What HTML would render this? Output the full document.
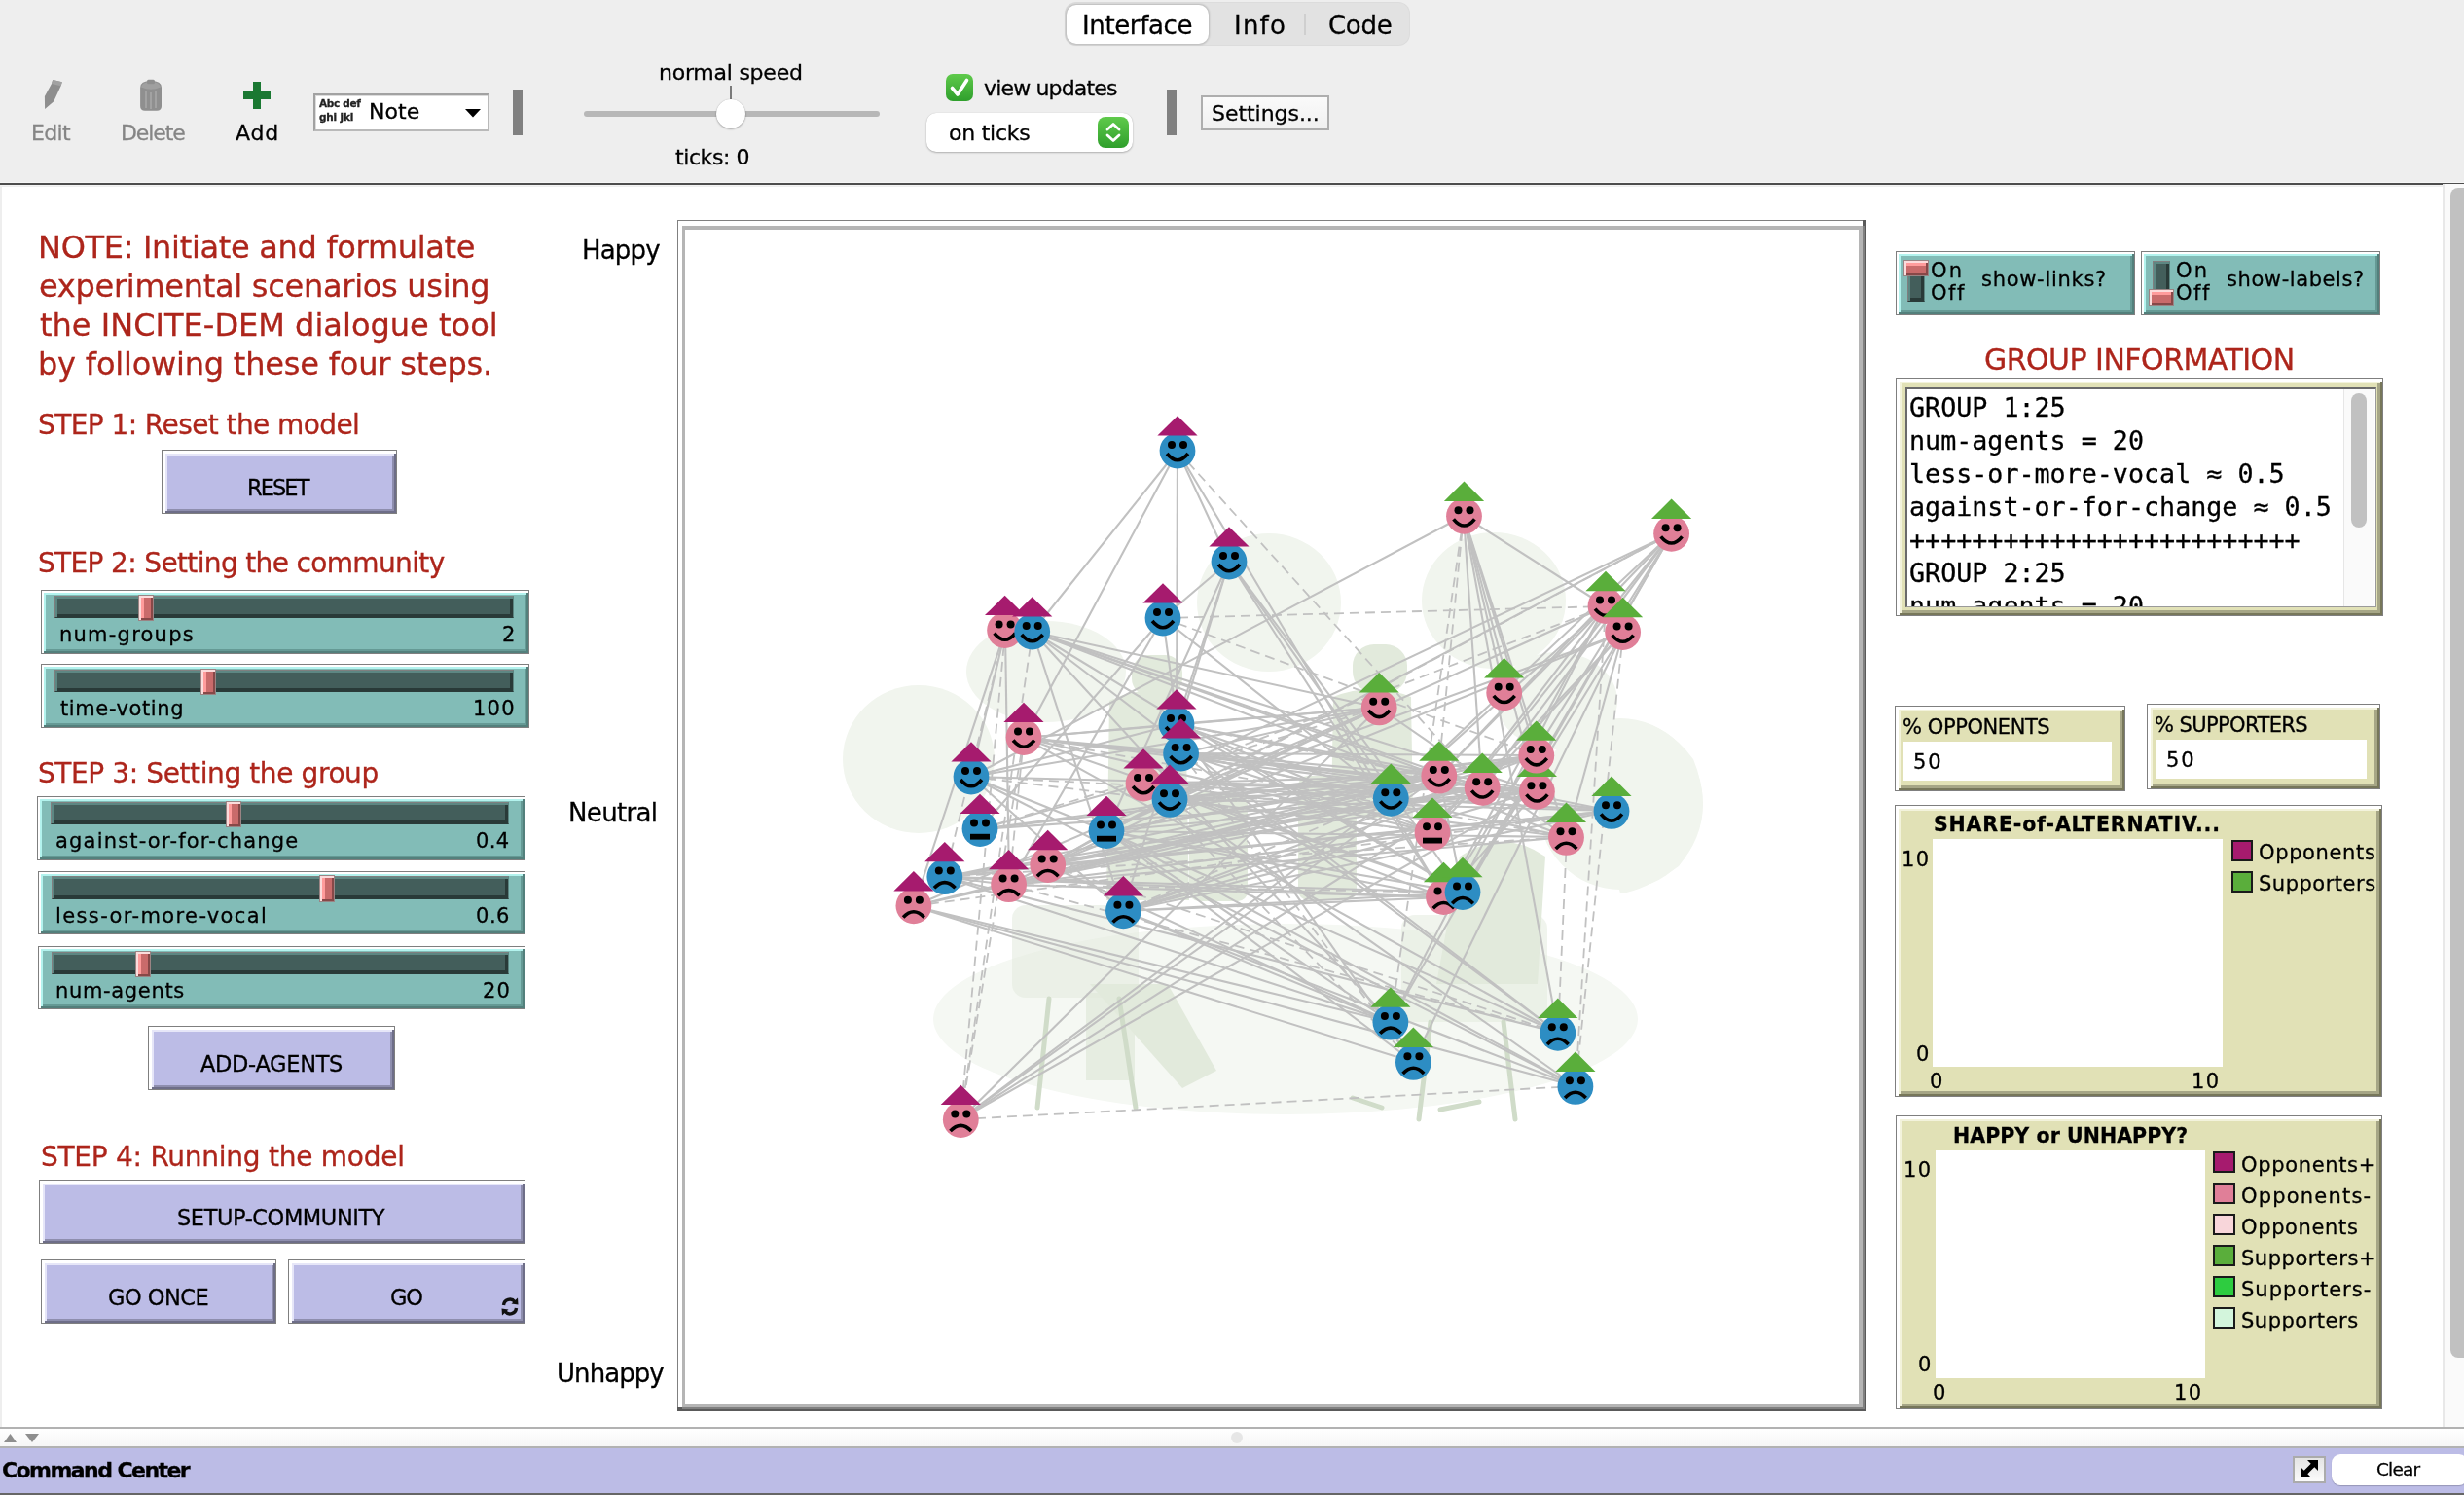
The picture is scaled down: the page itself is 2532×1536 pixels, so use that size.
<!DOCTYPE html>
<html lang="en"><head><meta charset="utf-8"><title>NetLogo - INCITE-DEM dialogue tool</title>
<style>
html,body{margin:0;padding:0;}
body{width:2532px;height:1536px;overflow:hidden;background:#fff;position:relative;font-family:"DejaVu Sans","Liberation Sans",sans-serif;}
.t{position:absolute;white-space:pre;-webkit-text-stroke:0.3px currentColor;will-change:transform;}
div{box-sizing:border-box;}
.bev{border:1px solid #7f7f7f;}
.sl{background:#82bcb7;box-shadow:inset 2px 2px 0 #fff,inset -2px -2px 0 #53807c,inset 4px 4px 0 #b3f3ee,inset -4px -4px 0 #659a95;}
.bt{background:#bcbce6;box-shadow:inset 3px 3px 0 #fff,inset -2px -2px 0 #6e6e88,inset 5px 5px 0 #e6e6f8,inset -4px -4px 0 #8e8eae;}
.mo{background:#e1e1b6;box-shadow:inset 3px 3px 0 #fff,inset -2px -2px 0 #77775a,inset 5px 5px 0 #f3f3dc,inset -5px -5px 0 #a6a686;}
.ch{background:#435e5b;border:1px solid #7f7f7f;border-right-color:#5b8581;border-bottom-color:#2a3b39;box-shadow:inset 2px 2px 0 #5d8783,inset -3px -3px 0 #293a38;}
.hd{background:#c96b6b;border:1px solid #9a8484;box-shadow:inset 2px 2px 0 #fbdcdc,inset -2px -2px 0 #874848,inset 5px 0 0 #ff9c9c;}
</style></head>
<body>
<div class="" style="position:absolute;left:0px;top:0px;width:2532px;height:192px;background:#eeeeee;"></div>
<div class="" style="position:absolute;left:0px;top:187px;width:2532px;height:1px;background:#f6f6f6;"></div>
<div class="" style="position:absolute;left:0px;top:188px;width:2532px;height:2px;background:#4d4d4d;"></div>
<div class="" style="position:absolute;left:0px;top:190px;width:2532px;height:1px;background:#f4f4f4;"></div>
<div class="" style="position:absolute;left:1095px;top:3px;width:353px;height:43px;background:#e2e2e2;border-radius:11px;box-shadow:0 0 0 1px #dcdcdc;"></div>
<div class="" style="position:absolute;left:1096px;top:5px;width:146px;height:40px;background:#fff;border-radius:10px;box-shadow:0 0 2px 1px rgba(0,0,0,.18);"></div>
<div class="" style="position:absolute;left:1340px;top:14px;width:2px;height:22px;background:#cfcfcf;"></div>
<div class="t" style="left:1111.5px;top:12.6px;font-size:26px;line-height:26px;letter-spacing:-0.37px;color:#000;font-weight:400;font-family:"DejaVu Sans","Liberation Sans",sans-serif;">Interface</div>
<div class="t" style="left:1267.5px;top:12.6px;font-size:26px;line-height:26px;letter-spacing:1.21px;color:#000;font-weight:400;font-family:"DejaVu Sans","Liberation Sans",sans-serif;">Info</div>
<div class="t" style="left:1365.0px;top:12.6px;font-size:26px;line-height:26px;letter-spacing:-0.28px;color:#000;font-weight:400;font-family:"DejaVu Sans","Liberation Sans",sans-serif;">Code</div>
<div class="t" style="left:31.5px;top:125.6px;font-size:22px;line-height:22px;letter-spacing:-0.65px;color:#858585;font-weight:400;font-family:"DejaVu Sans","Liberation Sans",sans-serif;">Edit</div>
<div class="t" style="left:123.6px;top:125.6px;font-size:22px;line-height:22px;letter-spacing:-1.10px;color:#858585;font-weight:400;font-family:"DejaVu Sans","Liberation Sans",sans-serif;">Delete</div>
<div class="t" style="left:242.1px;top:125.6px;font-size:22px;line-height:22px;letter-spacing:0.76px;color:#000;font-weight:400;font-family:"DejaVu Sans","Liberation Sans",sans-serif;">Add</div>
<svg style="position:absolute;left:40px;top:78px" width="30" height="38" viewBox="0 0 30 38"><path d="M14.2 4 L23.8 6.3 L22.6 10.3 L15.2 26.2 L6.1 34 L5.9 21 L13 8Z" fill="#8e8e8e"/><path d="M14.2 4 L23.8 6.3 L22.6 10.3 L13 8Z" fill="#a2a2a2"/></svg>
<svg style="position:absolute;left:140px;top:78px" width="30" height="40" viewBox="0 0 30 40"><path d="M4.1 12 Q4.1 5 15 5 Q26 5 26 12 L26 31 Q26 35.8 21 35.8 L9 35.8 Q4.1 35.8 4.1 31Z" fill="#8f8f8f"/><path d="M5 11.5 Q15 16 25 11.5 Q24 6 15 6 Q6 6 5 11.5Z" fill="#a0a0a0"/><rect x="11" y="3.8" width="8" height="4.5" rx="1.5" fill="#8f8f8f"/><path d="M10 16v17M15 17v17M20 16v17" stroke="#a2a2a2" stroke-width="2"/></svg>
<div class="" style="position:absolute;left:250px;top:94px;width:28px;height:8px;background:#1a7832;"></div>
<div class="" style="position:absolute;left:260px;top:84px;width:8px;height:28px;background:#1a7832;"></div>
<div class="" style="position:absolute;left:322px;top:96px;width:181px;height:39px;background:#fff;border:2px solid #a2a2a2;border-right-color:#b9b9b9;border-bottom-color:#b9b9b9;box-shadow:inset 1px 1px 0 #dcdcdc;"></div>
<div class="t" style="left:327.9px;top:101.4px;font-size:10.5px;line-height:10.5px;letter-spacing:-0.30px;color:#222;font-weight:700;font-family:"DejaVu Sans","Liberation Sans",sans-serif;-webkit-text-stroke:0;">Abc def</div>
<div class="t" style="left:327.6px;top:115.4px;font-size:10.5px;line-height:10.5px;letter-spacing:-0.19px;color:#222;font-weight:700;font-family:"DejaVu Sans","Liberation Sans",sans-serif;-webkit-text-stroke:0;">ghi jkl</div>
<div class="t" style="left:378.6px;top:104.0px;font-size:22px;line-height:22px;letter-spacing:0.05px;color:#000;font-weight:400;font-family:"DejaVu Sans","Liberation Sans",sans-serif;">Note</div>
<svg style="position:absolute;left:478px;top:112px" width="16" height="9"><path d="M0 0H16L8 8.5Z" fill="#000"/></svg>
<div class="" style="position:absolute;left:527px;top:92px;width:10px;height:47px;background:#808080;"></div>
<div class="t" style="left:677.0px;top:64.2px;font-size:22px;line-height:22px;letter-spacing:-0.24px;color:#000;font-weight:400;font-family:"DejaVu Sans","Liberation Sans",sans-serif;">normal speed</div>
<div class="" style="position:absolute;left:749.5px;top:88px;width:2.0px;height:14px;background:#7a7a7a;"></div>
<div class="" style="position:absolute;left:600px;top:114px;width:304px;height:6px;background:#b7b7b7;border-radius:3px;"></div>
<div class="" style="position:absolute;left:736px;top:102px;width:30px;height:30px;background:#fff;border-radius:15px;box-shadow:0 1px 2px rgba(0,0,0,.28),0 0 1px rgba(0,0,0,.25);"></div>
<div class="t" style="left:694.2px;top:150.6px;font-size:22px;line-height:22px;letter-spacing:-0.42px;color:#000;font-weight:400;font-family:"DejaVu Sans","Liberation Sans",sans-serif;">ticks: 0</div>
<div class="" style="position:absolute;left:972px;top:76px;width:28px;height:28px;background:linear-gradient(#5fca4b,#2f9f2c);border-radius:7px;"></div>
<svg style="position:absolute;left:972px;top:76px" width="28" height="28"><path d="M6.5 14.5 L12 21 L21.5 6.5" fill="none" stroke="#fff" stroke-width="3.6" stroke-linecap="round" stroke-linejoin="round"/></svg>
<div class="t" style="left:1011.3px;top:80.2px;font-size:22px;line-height:22px;letter-spacing:-0.84px;color:#000;font-weight:400;font-family:"DejaVu Sans","Liberation Sans",sans-serif;">view updates</div>
<div class="" style="position:absolute;left:952px;top:116px;width:212px;height:40px;background:#fff;border-radius:10px;box-shadow:0 1px 2px rgba(0,0,0,.25),0 0 1px rgba(0,0,0,.2);"></div>
<div class="t" style="left:975.4px;top:125.6px;font-size:22px;line-height:22px;letter-spacing:-0.24px;color:#000;font-weight:400;font-family:"DejaVu Sans","Liberation Sans",sans-serif;">on ticks</div>
<div class="" style="position:absolute;left:1128px;top:120px;width:32px;height:32px;background:linear-gradient(#5fca4b,#2f9f2c);border-radius:8px;"></div>
<svg style="position:absolute;left:1128px;top:120px" width="32" height="32"><path d="M10 13 L16 7.5 L22 13 M10 19 L16 24.5 L22 19" fill="none" stroke="#fff" stroke-width="2.8" stroke-linecap="round" stroke-linejoin="round"/></svg>
<div class="" style="position:absolute;left:1199px;top:92px;width:10px;height:47px;background:#808080;"></div>
<div class="" style="position:absolute;left:1234px;top:98px;width:132px;height:36px;background:linear-gradient(#fafafa,#f0f0f0);border:2px solid #aeaeae;"></div>
<div class="t" style="left:1244.6px;top:106.2px;font-size:22px;line-height:22px;letter-spacing:-0.04px;color:#000;font-weight:400;font-family:"DejaVu Sans","Liberation Sans",sans-serif;">Settings...</div>
<div class="" style="position:absolute;left:0px;top:192px;width:2px;height:1274px;background:#eeeeee;"></div>
<div class="t" style="left:38.8px;top:238.1px;font-size:32px;line-height:32px;letter-spacing:-0.31px;color:#ad251b;font-weight:400;font-family:"DejaVu Sans","Liberation Sans",sans-serif;">NOTE: Initiate and formulate</div>
<div class="t" style="left:40.0px;top:278.0px;font-size:32px;line-height:32px;letter-spacing:-0.28px;color:#ad251b;font-weight:400;font-family:"DejaVu Sans","Liberation Sans",sans-serif;">experimental scenarios using</div>
<div class="t" style="left:41.0px;top:317.9px;font-size:32px;line-height:32px;letter-spacing:0.02px;color:#ad251b;font-weight:400;font-family:"DejaVu Sans","Liberation Sans",sans-serif;">the INCITE-DEM dialogue tool</div>
<div class="t" style="left:38.9px;top:357.5px;font-size:32px;line-height:32px;letter-spacing:-0.20px;color:#ad251b;font-weight:400;font-family:"DejaVu Sans","Liberation Sans",sans-serif;">by following these four steps.</div>
<div class="t" style="left:39.1px;top:422.6px;font-size:28px;line-height:28px;letter-spacing:-0.58px;color:#ad251b;font-weight:400;font-family:"DejaVu Sans","Liberation Sans",sans-serif;">STEP 1: Reset the model</div>
<div class="bev bt" style="position:absolute;left:166px;top:462px;width:242px;height:66px;"></div>
<div class="t" style="left:253.7px;top:489.8px;font-size:22.5px;line-height:22.5px;letter-spacing:-1.92px;color:#000;font-weight:400;font-family:"DejaVu Sans","Liberation Sans",sans-serif;">RESET</div>
<div class="t" style="left:39.1px;top:565.1px;font-size:28px;line-height:28px;letter-spacing:-0.65px;color:#ad251b;font-weight:400;font-family:"DejaVu Sans","Liberation Sans",sans-serif;">STEP 2: Setting the community</div>
<div class="bev sl" style="position:absolute;left:42px;top:606px;width:502px;height:66px;"></div>
<div class="ch" style="position:absolute;left:56px;top:611.7px;width:471.70000000000005px;height:23.799999999999955px;"></div>
<div class="hd" style="position:absolute;left:142px;top:610.5px;width:16px;height:27.5px;"></div>
<div class="t" style="left:60.8px;top:642.2px;font-size:21px;line-height:21px;letter-spacing:1.23px;color:#000;font-weight:400;font-family:"DejaVu Sans","Liberation Sans",sans-serif;">num-groups</div>
<div class="t" style="left:515.5px;top:642.2px;font-size:21px;line-height:21px;letter-spacing:0.00px;color:#000;font-weight:400;font-family:"DejaVu Sans","Liberation Sans",sans-serif;">2</div>
<div class="bev sl" style="position:absolute;left:42px;top:682px;width:502px;height:65.5px;"></div>
<div class="ch" style="position:absolute;left:56px;top:687.7px;width:471.70000000000005px;height:23.799999999999955px;"></div>
<div class="hd" style="position:absolute;left:206px;top:686.5px;width:16px;height:27.5px;"></div>
<div class="t" style="left:62.2px;top:718.2px;font-size:21px;line-height:21px;letter-spacing:0.61px;color:#000;font-weight:400;font-family:"DejaVu Sans","Liberation Sans",sans-serif;">time-voting</div>
<div class="t" style="left:485.6px;top:718.2px;font-size:21px;line-height:21px;letter-spacing:1.23px;color:#000;font-weight:400;font-family:"DejaVu Sans","Liberation Sans",sans-serif;">100</div>
<div class="t" style="left:39.1px;top:780.7px;font-size:28px;line-height:28px;letter-spacing:-0.40px;color:#ad251b;font-weight:400;font-family:"DejaVu Sans","Liberation Sans",sans-serif;">STEP 3: Setting the group</div>
<div class="bev sl" style="position:absolute;left:38px;top:818px;width:501.5px;height:65.5px;"></div>
<div class="ch" style="position:absolute;left:52px;top:823.7px;width:471.20000000000005px;height:23.799999999999955px;"></div>
<div class="hd" style="position:absolute;left:232px;top:822.5px;width:16px;height:27.5px;"></div>
<div class="t" style="left:57.4px;top:854.2px;font-size:21px;line-height:21px;letter-spacing:1.19px;color:#000;font-weight:400;font-family:"DejaVu Sans","Liberation Sans",sans-serif;">against-or-for-change</div>
<div class="t" style="left:489.1px;top:854.2px;font-size:21px;line-height:21px;letter-spacing:0.41px;color:#000;font-weight:400;font-family:"DejaVu Sans","Liberation Sans",sans-serif;">0.4</div>
<div class="bev sl" style="position:absolute;left:38.5px;top:894.5px;width:501.0px;height:65.0px;"></div>
<div class="ch" style="position:absolute;left:52.5px;top:900.2px;width:470.70000000000005px;height:23.799999999999955px;"></div>
<div class="hd" style="position:absolute;left:328px;top:899.0px;width:16px;height:27.5px;"></div>
<div class="t" style="left:57.3px;top:930.7px;font-size:21px;line-height:21px;letter-spacing:1.39px;color:#000;font-weight:400;font-family:"DejaVu Sans","Liberation Sans",sans-serif;">less-or-more-vocal</div>
<div class="t" style="left:489.1px;top:930.7px;font-size:21px;line-height:21px;letter-spacing:0.52px;color:#000;font-weight:400;font-family:"DejaVu Sans","Liberation Sans",sans-serif;">0.6</div>
<div class="bev sl" style="position:absolute;left:38.5px;top:972px;width:501.0px;height:65px;"></div>
<div class="ch" style="position:absolute;left:52.5px;top:977.7px;width:470.70000000000005px;height:23.799999999999955px;"></div>
<div class="hd" style="position:absolute;left:138.5px;top:976.5px;width:16.0px;height:27.5px;"></div>
<div class="t" style="left:57.3px;top:1008.2px;font-size:21px;line-height:21px;letter-spacing:0.67px;color:#000;font-weight:400;font-family:"DejaVu Sans","Liberation Sans",sans-serif;">num-agents</div>
<div class="t" style="left:495.8px;top:1008.2px;font-size:21px;line-height:21px;letter-spacing:1.16px;color:#000;font-weight:400;font-family:"DejaVu Sans","Liberation Sans",sans-serif;">20</div>
<div class="bev bt" style="position:absolute;left:152px;top:1054px;width:254px;height:65.5px;"></div>
<div class="t" style="left:206.4px;top:1081.8px;font-size:22.5px;line-height:22.5px;letter-spacing:-0.31px;color:#000;font-weight:400;font-family:"DejaVu Sans","Liberation Sans",sans-serif;">ADD-AGENTS</div>
<div class="t" style="left:42.2px;top:1174.6px;font-size:28px;line-height:28px;letter-spacing:-0.26px;color:#ad251b;font-weight:400;font-family:"DejaVu Sans","Liberation Sans",sans-serif;">STEP 4: Running the model</div>
<div class="bev bt" style="position:absolute;left:40px;top:1212px;width:500px;height:65.5px;"></div>
<div class="t" style="left:182.4px;top:1239.8px;font-size:22.5px;line-height:22.5px;letter-spacing:-0.43px;color:#000;font-weight:400;font-family:"DejaVu Sans","Liberation Sans",sans-serif;">SETUP-COMMUNITY</div>
<div class="bev bt" style="position:absolute;left:42px;top:1294px;width:242px;height:65.5px;"></div>
<div class="t" style="left:111.2px;top:1321.8px;font-size:22.5px;line-height:22.5px;letter-spacing:-0.50px;color:#000;font-weight:400;font-family:"DejaVu Sans","Liberation Sans",sans-serif;">GO ONCE</div>
<div class="bev bt" style="position:absolute;left:296px;top:1294px;width:244px;height:65.5px;"></div>
<div class="t" style="left:401.0px;top:1321.8px;font-size:22.5px;line-height:22.5px;letter-spacing:-1.24px;color:#000;font-weight:400;font-family:"DejaVu Sans","Liberation Sans",sans-serif;">GO</div>
<svg style="position:absolute;left:514px;top:1332px" width="20" height="21" viewBox="0 0 20 21"><path d="M3.5 9 A6.5 6.5 0 0 1 15 5.5" fill="none" stroke="#111" stroke-width="3.4"/><path d="M11.5 7.5 L18.5 8.5 L18 1.5Z" fill="#111"/><path d="M16.5 12 A6.5 6.5 0 0 1 5 15.5" fill="none" stroke="#111" stroke-width="3.4"/><path d="M8.5 13.5 L1.5 12.5 L2 19.5Z" fill="#111"/></svg>
<div class="t" style="left:597.6px;top:244.0px;font-size:26px;line-height:26px;letter-spacing:-0.81px;color:#000;font-weight:400;font-family:"DejaVu Sans","Liberation Sans",sans-serif;">Happy</div>
<div class="t" style="left:583.5px;top:822.1px;font-size:26px;line-height:26px;letter-spacing:-0.65px;color:#000;font-weight:400;font-family:"DejaVu Sans","Liberation Sans",sans-serif;">Neutral</div>
<div class="t" style="left:571.6px;top:1397.9px;font-size:26px;line-height:26px;letter-spacing:-0.93px;color:#000;font-weight:400;font-family:"DejaVu Sans","Liberation Sans",sans-serif;">Unhappy</div>
<div class="" style="position:absolute;left:696px;top:226px;width:1222px;height:1224px;background:#fff;border-top:1px solid #808080;border-left:1px solid #808080;"></div>
<div class="" style="position:absolute;left:701px;top:232px;width:1217px;height:1218px;background:#b5b5b5;"></div>
<div class="" style="position:absolute;left:701px;top:1446px;width:1217px;height:4px;background:#5a5a5a;"></div>
<div class="" style="position:absolute;left:1914px;top:232px;width:4px;height:1218px;background:#5a5a5a;"></div>
<div class="" style="position:absolute;left:701px;top:1446px;width:1215px;height:2px;background:#808080;"></div>
<div class="" style="position:absolute;left:1914px;top:232px;width:2px;height:1216px;background:#808080;"></div>
<div class="" style="position:absolute;left:696px;top:1446px;width:5px;height:4px;background:#5a5a5a;"></div>
<div class="" style="position:absolute;left:1914px;top:226px;width:4px;height:6px;background:#5a5a5a;"></div>
<div class="" style="position:absolute;left:704px;top:236px;width:1206px;height:1206px;background:#fff;"></div>
<svg style="position:absolute;left:0;top:0" width="2532" height="1536" viewBox="0 0 2532 1536">
<g fill="#f1f5ee"><ellipse cx="944" cy="780" rx="78" ry="76"/><ellipse cx="1075" cy="690" rx="82" ry="52"/><ellipse cx="1304" cy="619" rx="74" ry="71"/><ellipse cx="1535" cy="617" rx="74" ry="70"/><ellipse cx="1600" cy="720" rx="62" ry="50"/><path d="M1634 745Q1700 725 1740 780Q1765 840 1725 890Q1690 915 1665 918L1650 860Z"/><ellipse cx="1665" cy="826" rx="85" ry="88"/></g>
<ellipse cx="1321" cy="1047" rx="362" ry="98" fill="#f5f8f3"/>
<g fill="#e2eadc"><rect x="1163" y="673" width="52" height="42" rx="18"/><path d="M1140 720Q1178 700 1218 720L1222 925L1137 925Z"/><rect x="1222" y="814" width="60" height="112" rx="10"/><rect x="1334" y="797" width="60" height="128" rx="10"/><rect x="1390" y="662" width="56" height="50" rx="22"/><path d="M1370 716Q1410 700 1450 716L1452 840L1368 840Z"/><path d="M1500 880Q1545 850 1588 880L1580 1011L1476 1011Z"/><path d="M1120 1011L1200 1011L1250 1100L1215 1118Z"/><rect x="1116" y="1020" width="50" height="90" opacity=".8"/><rect x="1040" y="930" width="130" height="95" rx="14" opacity=".55"/><rect x="1440" y="940" width="150" height="110" rx="14" opacity=".5"/></g>
<g stroke="#d0dcc9" stroke-width="5" fill="none" stroke-linecap="round"><path d="M1078 1026L1066 1138M1150 1026L1167 1138M1470 1050L1458 1150M1545 1050L1557 1150M1390 1128L1420 1138M1520 1132L1480 1140"/></g>
<g stroke="#c1c1c1" stroke-width="2.1" fill="none">
<line x1="1210" y1="463" x2="1263" y2="577"/>
<line x1="1210" y1="463" x2="1061" y2="649"/>
<line x1="1210" y1="463" x2="1052" y2="758"/>
<line x1="1210" y1="463" x2="1209" y2="744"/>
<line x1="1210" y1="463" x2="1523" y2="809" stroke-dasharray="10 6" stroke-width="1.8"/>
<line x1="1210" y1="463" x2="1484" y2="922"/>
<line x1="1263" y1="577" x2="1195" y2="635"/>
<line x1="1263" y1="577" x2="1209" y2="744"/>
<line x1="1263" y1="577" x2="1137" y2="854"/>
<line x1="1263" y1="577" x2="1154" y2="936"/>
<line x1="1263" y1="577" x2="1472" y2="855"/>
<line x1="1263" y1="577" x2="1484" y2="922"/>
<line x1="1263" y1="577" x2="1503" y2="917"/>
<line x1="1195" y1="635" x2="1214" y2="774"/>
<line x1="1195" y1="635" x2="1007" y2="852"/>
<line x1="1195" y1="635" x2="1037" y2="909"/>
<line x1="1195" y1="635" x2="1650" y2="623" stroke-dasharray="10 6" stroke-width="1.8"/>
<line x1="1195" y1="635" x2="1579" y2="776" stroke-dasharray="10 6" stroke-width="1.8"/>
<line x1="1195" y1="635" x2="1429" y2="820"/>
<line x1="1033" y1="648" x2="998" y2="798"/>
<line x1="1033" y1="648" x2="939" y2="931"/>
<line x1="1033" y1="648" x2="971" y2="901" stroke-dasharray="10 6" stroke-width="1.8"/>
<line x1="1033" y1="648" x2="1037" y2="909"/>
<line x1="1033" y1="648" x2="987" y2="1150" stroke-dasharray="10 6" stroke-width="1.8"/>
<line x1="1061" y1="649" x2="1154" y2="936"/>
<line x1="1061" y1="649" x2="987" y2="1150" stroke-dasharray="10 6" stroke-width="1.8"/>
<line x1="1061" y1="649" x2="1417" y2="727"/>
<line x1="1061" y1="649" x2="1579" y2="813"/>
<line x1="1061" y1="649" x2="1479" y2="797"/>
<line x1="1061" y1="649" x2="1523" y2="809"/>
<line x1="1061" y1="649" x2="1610" y2="860"/>
<line x1="1061" y1="649" x2="1503" y2="917"/>
<line x1="1061" y1="649" x2="1429" y2="1050"/>
<line x1="1061" y1="649" x2="1601" y2="1061"/>
<line x1="1052" y1="758" x2="1209" y2="744"/>
<line x1="1052" y1="758" x2="1037" y2="909" stroke-dasharray="10 6" stroke-width="1.8"/>
<line x1="1052" y1="758" x2="987" y2="1150" stroke-dasharray="10 6" stroke-width="1.8"/>
<line x1="1052" y1="758" x2="1417" y2="727"/>
<line x1="1052" y1="758" x2="1579" y2="813"/>
<line x1="1052" y1="758" x2="1479" y2="797"/>
<line x1="1052" y1="758" x2="1523" y2="809"/>
<line x1="1052" y1="758" x2="1472" y2="855"/>
<line x1="1052" y1="758" x2="1610" y2="860" stroke-dasharray="10 6" stroke-width="1.8"/>
<line x1="1052" y1="758" x2="1656" y2="833"/>
<line x1="1052" y1="758" x2="1503" y2="917"/>
<line x1="1052" y1="758" x2="1601" y2="1061"/>
<line x1="1209" y1="744" x2="998" y2="798"/>
<line x1="1209" y1="744" x2="1417" y2="727"/>
<line x1="1209" y1="744" x2="1579" y2="813"/>
<line x1="1209" y1="744" x2="1523" y2="809" stroke-dasharray="10 6" stroke-width="1.8"/>
<line x1="1209" y1="744" x2="1429" y2="820"/>
<line x1="1209" y1="744" x2="1472" y2="855"/>
<line x1="1209" y1="744" x2="1656" y2="833"/>
<line x1="1209" y1="744" x2="1503" y2="917"/>
<line x1="1209" y1="744" x2="1452" y2="1091"/>
<line x1="1214" y1="774" x2="1202" y2="821" stroke-dasharray="10 6" stroke-width="1.8"/>
<line x1="1214" y1="774" x2="1417" y2="727"/>
<line x1="1214" y1="774" x2="1579" y2="813"/>
<line x1="1214" y1="774" x2="1579" y2="776"/>
<line x1="1214" y1="774" x2="1429" y2="820"/>
<line x1="1214" y1="774" x2="1472" y2="855"/>
<line x1="1214" y1="774" x2="1610" y2="860"/>
<line x1="1214" y1="774" x2="1656" y2="833"/>
<line x1="1214" y1="774" x2="1452" y2="1091" stroke-dasharray="10 6" stroke-width="1.8"/>
<line x1="1214" y1="774" x2="1601" y2="1061"/>
<line x1="998" y1="798" x2="1137" y2="854"/>
<line x1="998" y1="798" x2="1154" y2="936"/>
<line x1="998" y1="798" x2="1504" y2="530"/>
<line x1="998" y1="798" x2="1417" y2="727"/>
<line x1="998" y1="798" x2="1579" y2="813"/>
<line x1="998" y1="798" x2="1429" y2="820" stroke-dasharray="10 6" stroke-width="1.8"/>
<line x1="998" y1="798" x2="1472" y2="855" stroke-dasharray="10 6" stroke-width="1.8"/>
<line x1="998" y1="798" x2="1619" y2="1116"/>
<line x1="1175" y1="805" x2="1007" y2="852"/>
<line x1="1175" y1="805" x2="1718" y2="548"/>
<line x1="1175" y1="805" x2="1650" y2="623" stroke-dasharray="10 6" stroke-width="1.8"/>
<line x1="1175" y1="805" x2="1579" y2="813"/>
<line x1="1175" y1="805" x2="1479" y2="797"/>
<line x1="1175" y1="805" x2="1610" y2="860"/>
<line x1="1175" y1="805" x2="1656" y2="833"/>
<line x1="1175" y1="805" x2="1484" y2="922"/>
<line x1="1175" y1="805" x2="1503" y2="917"/>
<line x1="1175" y1="805" x2="1452" y2="1091" stroke-dasharray="10 6" stroke-width="1.8"/>
<line x1="1202" y1="821" x2="1037" y2="909"/>
<line x1="1202" y1="821" x2="1718" y2="548" stroke-dasharray="10 6" stroke-width="1.8"/>
<line x1="1202" y1="821" x2="1668" y2="650"/>
<line x1="1202" y1="821" x2="1417" y2="727" stroke-dasharray="10 6" stroke-width="1.8"/>
<line x1="1202" y1="821" x2="1579" y2="776"/>
<line x1="1202" y1="821" x2="1479" y2="797"/>
<line x1="1202" y1="821" x2="1523" y2="809"/>
<line x1="1202" y1="821" x2="1429" y2="820" stroke-dasharray="10 6" stroke-width="1.8"/>
<line x1="1202" y1="821" x2="1472" y2="855"/>
<line x1="1202" y1="821" x2="1656" y2="833"/>
<line x1="1202" y1="821" x2="1619" y2="1116"/>
<line x1="1007" y1="852" x2="1417" y2="727" stroke-dasharray="10 6" stroke-width="1.8"/>
<line x1="1007" y1="852" x2="1579" y2="813"/>
<line x1="1007" y1="852" x2="1579" y2="776"/>
<line x1="1007" y1="852" x2="1479" y2="797"/>
<line x1="1137" y1="854" x2="1077" y2="889"/>
<line x1="1137" y1="854" x2="1718" y2="548"/>
<line x1="1137" y1="854" x2="1650" y2="623"/>
<line x1="1137" y1="854" x2="1579" y2="813"/>
<line x1="1137" y1="854" x2="1579" y2="776"/>
<line x1="1137" y1="854" x2="1479" y2="797"/>
<line x1="1137" y1="854" x2="1610" y2="860"/>
<line x1="1137" y1="854" x2="1484" y2="922"/>
<line x1="1137" y1="854" x2="1503" y2="917"/>
<line x1="1137" y1="854" x2="1429" y2="1050"/>
<line x1="1137" y1="854" x2="1452" y2="1091"/>
<line x1="1137" y1="854" x2="1601" y2="1061"/>
<line x1="1137" y1="854" x2="1619" y2="1116"/>
<line x1="939" y1="931" x2="1417" y2="727"/>
<line x1="939" y1="931" x2="1479" y2="797"/>
<line x1="939" y1="931" x2="1429" y2="820"/>
<line x1="939" y1="931" x2="1656" y2="833" stroke-dasharray="10 6" stroke-width="1.8"/>
<line x1="939" y1="931" x2="1429" y2="1050"/>
<line x1="939" y1="931" x2="1452" y2="1091"/>
<line x1="939" y1="931" x2="1619" y2="1116"/>
<line x1="971" y1="901" x2="1037" y2="909"/>
<line x1="971" y1="901" x2="1579" y2="813"/>
<line x1="971" y1="901" x2="1579" y2="776"/>
<line x1="971" y1="901" x2="1523" y2="809"/>
<line x1="971" y1="901" x2="1610" y2="860" stroke-dasharray="10 6" stroke-width="1.8"/>
<line x1="971" y1="901" x2="1656" y2="833"/>
<line x1="971" y1="901" x2="1484" y2="922"/>
<line x1="971" y1="901" x2="1503" y2="917"/>
<line x1="971" y1="901" x2="1429" y2="1050"/>
<line x1="971" y1="901" x2="1601" y2="1061"/>
<line x1="1037" y1="909" x2="1579" y2="776"/>
<line x1="1037" y1="909" x2="1479" y2="797"/>
<line x1="1037" y1="909" x2="1523" y2="809"/>
<line x1="1037" y1="909" x2="1610" y2="860"/>
<line x1="1037" y1="909" x2="1656" y2="833"/>
<line x1="1037" y1="909" x2="1484" y2="922"/>
<line x1="1037" y1="909" x2="1503" y2="917" stroke-dasharray="10 6" stroke-width="1.8"/>
<line x1="1037" y1="909" x2="1601" y2="1061" stroke-dasharray="10 6" stroke-width="1.8"/>
<line x1="1077" y1="889" x2="1668" y2="650"/>
<line x1="1077" y1="889" x2="1417" y2="727"/>
<line x1="1077" y1="889" x2="1479" y2="797"/>
<line x1="1077" y1="889" x2="1523" y2="809"/>
<line x1="1077" y1="889" x2="1656" y2="833"/>
<line x1="1077" y1="889" x2="1429" y2="1050"/>
<line x1="1077" y1="889" x2="1601" y2="1061" stroke-dasharray="10 6" stroke-width="1.8"/>
<line x1="1154" y1="936" x2="1579" y2="813"/>
<line x1="1154" y1="936" x2="1579" y2="776"/>
<line x1="1154" y1="936" x2="1479" y2="797" stroke-dasharray="10 6" stroke-width="1.8"/>
<line x1="1154" y1="936" x2="1523" y2="809"/>
<line x1="1154" y1="936" x2="1472" y2="855"/>
<line x1="1154" y1="936" x2="1656" y2="833"/>
<line x1="1154" y1="936" x2="1484" y2="922"/>
<line x1="1154" y1="936" x2="1503" y2="917"/>
<line x1="1154" y1="936" x2="1429" y2="1050"/>
<line x1="1154" y1="936" x2="1619" y2="1116"/>
<line x1="987" y1="1150" x2="1417" y2="727"/>
<line x1="987" y1="1150" x2="1579" y2="813"/>
<line x1="987" y1="1150" x2="1479" y2="797"/>
<line x1="987" y1="1150" x2="1523" y2="809"/>
<line x1="987" y1="1150" x2="1429" y2="820"/>
<line x1="987" y1="1150" x2="1619" y2="1116" stroke-dasharray="10 6" stroke-width="1.8"/>
<line x1="1504" y1="530" x2="1650" y2="623"/>
<line x1="1504" y1="530" x2="1546" y2="712"/>
<line x1="1504" y1="530" x2="1579" y2="813"/>
<line x1="1504" y1="530" x2="1579" y2="776"/>
<line x1="1504" y1="530" x2="1523" y2="809"/>
<line x1="1504" y1="530" x2="1472" y2="855" stroke-dasharray="10 6" stroke-width="1.8"/>
<line x1="1504" y1="530" x2="1610" y2="860"/>
<line x1="1504" y1="530" x2="1429" y2="1050" stroke-dasharray="10 6" stroke-width="1.8"/>
<line x1="1504" y1="530" x2="1601" y2="1061"/>
<line x1="1718" y1="548" x2="1479" y2="797"/>
<line x1="1718" y1="548" x2="1523" y2="809"/>
<line x1="1718" y1="548" x2="1429" y2="820"/>
<line x1="1718" y1="548" x2="1472" y2="855"/>
<line x1="1718" y1="548" x2="1484" y2="922"/>
<line x1="1718" y1="548" x2="1503" y2="917"/>
<line x1="1718" y1="548" x2="1429" y2="1050"/>
<line x1="1650" y1="623" x2="1479" y2="797"/>
<line x1="1650" y1="623" x2="1429" y2="820"/>
<line x1="1650" y1="623" x2="1472" y2="855"/>
<line x1="1650" y1="623" x2="1484" y2="922"/>
<line x1="1650" y1="623" x2="1429" y2="1050"/>
<line x1="1650" y1="623" x2="1619" y2="1116" stroke-dasharray="10 6" stroke-width="1.8"/>
<line x1="1668" y1="650" x2="1523" y2="809"/>
<line x1="1668" y1="650" x2="1472" y2="855"/>
<line x1="1668" y1="650" x2="1610" y2="860"/>
<line x1="1668" y1="650" x2="1503" y2="917"/>
<line x1="1668" y1="650" x2="1452" y2="1091"/>
<line x1="1668" y1="650" x2="1619" y2="1116" stroke-dasharray="10 6" stroke-width="1.8"/>
<line x1="1417" y1="727" x2="1610" y2="860"/>
<line x1="1579" y1="813" x2="1579" y2="776" stroke-dasharray="10 6" stroke-width="1.8"/>
<line x1="1579" y1="813" x2="1484" y2="922"/>
<line x1="1579" y1="776" x2="1429" y2="820"/>
<line x1="1479" y1="797" x2="1429" y2="820"/>
<line x1="1479" y1="797" x2="1503" y2="917"/>
<line x1="1429" y1="820" x2="1656" y2="833"/>
<line x1="1610" y1="860" x2="1601" y2="1061" stroke-dasharray="10 6" stroke-width="1.8"/>
</g>
<g transform="translate(1210.0,463.0)"><circle r="18.4" fill="#2d8dc3"/><path d="M-20.6 -15.4H20.6L0 -35.8Z" fill="#a61b6e"/><circle cx="-6" cy="-6.1" r="4" fill="#000"/><circle cx="6" cy="-6.1" r="4" fill="#000"/><path d="M-10.9 3Q0 16.4 10.9 3" fill="none" stroke="#000" stroke-width="3.6"/></g>
<g transform="translate(1263.0,577.0)"><circle r="18.4" fill="#2d8dc3"/><path d="M-20.6 -15.4H20.6L0 -35.8Z" fill="#a61b6e"/><circle cx="-6" cy="-6.1" r="4" fill="#000"/><circle cx="6" cy="-6.1" r="4" fill="#000"/><path d="M-10.9 3Q0 16.4 10.9 3" fill="none" stroke="#000" stroke-width="3.6"/></g>
<g transform="translate(1195.0,635.0)"><circle r="18.4" fill="#2d8dc3"/><path d="M-20.6 -15.4H20.6L0 -35.8Z" fill="#a61b6e"/><circle cx="-6" cy="-6.1" r="4" fill="#000"/><circle cx="6" cy="-6.1" r="4" fill="#000"/><path d="M-10.9 3Q0 16.4 10.9 3" fill="none" stroke="#000" stroke-width="3.6"/></g>
<g transform="translate(1032.6,647.5)"><circle r="18.4" fill="#e07f98"/><path d="M-20.6 -15.4H20.6L0 -35.8Z" fill="#a61b6e"/><circle cx="-6" cy="-6.1" r="4" fill="#000"/><circle cx="6" cy="-6.1" r="4" fill="#000"/><path d="M-10.9 3Q0 16.4 10.9 3" fill="none" stroke="#000" stroke-width="3.6"/></g>
<g transform="translate(1060.7,649.0)"><circle r="18.4" fill="#2d8dc3"/><path d="M-20.6 -15.4H20.6L0 -35.8Z" fill="#a61b6e"/><circle cx="-6" cy="-6.1" r="4" fill="#000"/><circle cx="6" cy="-6.1" r="4" fill="#000"/><path d="M-10.9 3Q0 16.4 10.9 3" fill="none" stroke="#000" stroke-width="3.6"/></g>
<g transform="translate(1052.0,757.5)"><circle r="18.4" fill="#e07f98"/><path d="M-20.6 -15.4H20.6L0 -35.8Z" fill="#a61b6e"/><circle cx="-6" cy="-6.1" r="4" fill="#000"/><circle cx="6" cy="-6.1" r="4" fill="#000"/><path d="M-10.9 3Q0 16.4 10.9 3" fill="none" stroke="#000" stroke-width="3.6"/></g>
<g transform="translate(1209.0,744.0)"><circle r="18.4" fill="#2d8dc3"/><path d="M-20.6 -15.4H20.6L0 -35.8Z" fill="#a61b6e"/><circle cx="-6" cy="-6.1" r="4" fill="#000"/><circle cx="6" cy="-6.1" r="4" fill="#000"/><path d="M-10.9 3Q0 16.4 10.9 3" fill="none" stroke="#000" stroke-width="3.6"/></g>
<g transform="translate(1213.6,774.0)"><circle r="18.4" fill="#2d8dc3"/><path d="M-20.6 -15.4H20.6L0 -35.8Z" fill="#a61b6e"/><circle cx="-6" cy="-6.1" r="4" fill="#000"/><circle cx="6" cy="-6.1" r="4" fill="#000"/><path d="M-10.9 3Q0 16.4 10.9 3" fill="none" stroke="#000" stroke-width="3.6"/></g>
<g transform="translate(998.0,798.0)"><circle r="18.4" fill="#2d8dc3"/><path d="M-20.6 -15.4H20.6L0 -35.8Z" fill="#a61b6e"/><circle cx="-6" cy="-6.1" r="4" fill="#000"/><circle cx="6" cy="-6.1" r="4" fill="#000"/><path d="M-10.9 3Q0 16.4 10.9 3" fill="none" stroke="#000" stroke-width="3.6"/></g>
<g transform="translate(1175.0,805.0)"><circle r="18.4" fill="#e07f98"/><path d="M-20.6 -15.4H20.6L0 -35.8Z" fill="#a61b6e"/><circle cx="-6" cy="-6.1" r="4" fill="#000"/><circle cx="6" cy="-6.1" r="4" fill="#000"/><path d="M-10.9 3Q0 16.4 10.9 3" fill="none" stroke="#000" stroke-width="3.6"/></g>
<g transform="translate(1202.0,821.4)"><circle r="18.4" fill="#2d8dc3"/><path d="M-20.6 -15.4H20.6L0 -35.8Z" fill="#a61b6e"/><circle cx="-6" cy="-6.1" r="4" fill="#000"/><circle cx="6" cy="-6.1" r="4" fill="#000"/><path d="M-10.9 3Q0 16.4 10.9 3" fill="none" stroke="#000" stroke-width="3.6"/></g>
<g transform="translate(1007.0,851.5)"><circle r="18.4" fill="#2d8dc3"/><path d="M-20.6 -15.4H20.6L0 -35.8Z" fill="#a61b6e"/><circle cx="-6" cy="-6.1" r="4" fill="#000"/><circle cx="6" cy="-6.1" r="4" fill="#000"/><rect x="-10" y="5.3" width="20" height="5.8" fill="#000"/></g>
<g transform="translate(1137.0,853.5)"><circle r="18.4" fill="#2d8dc3"/><path d="M-20.6 -15.4H20.6L0 -35.8Z" fill="#a61b6e"/><circle cx="-6" cy="-6.1" r="4" fill="#000"/><circle cx="6" cy="-6.1" r="4" fill="#000"/><rect x="-10" y="5.3" width="20" height="5.8" fill="#000"/></g>
<g transform="translate(938.9,930.8)"><circle r="18.4" fill="#e07f98"/><path d="M-20.6 -15.4H20.6L0 -35.8Z" fill="#a61b6e"/><circle cx="-6" cy="-6.1" r="4" fill="#000"/><circle cx="6" cy="-6.1" r="4" fill="#000"/><path d="M-10.8 11.6Q0 0.2 10.8 11.6" fill="none" stroke="#000" stroke-width="3.6"/></g>
<g transform="translate(970.8,900.7)"><circle r="18.4" fill="#2d8dc3"/><path d="M-20.6 -15.4H20.6L0 -35.8Z" fill="#a61b6e"/><circle cx="-6" cy="-6.1" r="4" fill="#000"/><circle cx="6" cy="-6.1" r="4" fill="#000"/><path d="M-10.8 11.6Q0 0.2 10.8 11.6" fill="none" stroke="#000" stroke-width="3.6"/></g>
<g transform="translate(1036.6,908.7)"><circle r="18.4" fill="#e07f98"/><path d="M-20.6 -15.4H20.6L0 -35.8Z" fill="#a61b6e"/><circle cx="-6" cy="-6.1" r="4" fill="#000"/><circle cx="6" cy="-6.1" r="4" fill="#000"/><path d="M-10.8 11.6Q0 0.2 10.8 11.6" fill="none" stroke="#000" stroke-width="3.6"/></g>
<g transform="translate(1076.7,888.6)"><circle r="18.4" fill="#e07f98"/><path d="M-20.6 -15.4H20.6L0 -35.8Z" fill="#a61b6e"/><circle cx="-6" cy="-6.1" r="4" fill="#000"/><circle cx="6" cy="-6.1" r="4" fill="#000"/><path d="M-10.8 11.6Q0 0.2 10.8 11.6" fill="none" stroke="#000" stroke-width="3.6"/></g>
<g transform="translate(1154.4,935.8)"><circle r="18.4" fill="#2d8dc3"/><path d="M-20.6 -15.4H20.6L0 -35.8Z" fill="#a61b6e"/><circle cx="-6" cy="-6.1" r="4" fill="#000"/><circle cx="6" cy="-6.1" r="4" fill="#000"/><path d="M-10.8 11.6Q0 0.2 10.8 11.6" fill="none" stroke="#000" stroke-width="3.6"/></g>
<g transform="translate(987.3,1150.5)"><circle r="18.4" fill="#e07f98"/><path d="M-20.6 -15.4H20.6L0 -35.8Z" fill="#a61b6e"/><circle cx="-6" cy="-6.1" r="4" fill="#000"/><circle cx="6" cy="-6.1" r="4" fill="#000"/><path d="M-10.8 11.6Q0 0.2 10.8 11.6" fill="none" stroke="#000" stroke-width="3.6"/></g>
<g transform="translate(1504.5,530.3)"><circle r="18.4" fill="#e07f98"/><path d="M-20.6 -15.4H20.6L0 -35.8Z" fill="#5aae3b"/><circle cx="-6" cy="-6.1" r="4" fill="#000"/><circle cx="6" cy="-6.1" r="4" fill="#000"/><path d="M-10.9 3Q0 16.4 10.9 3" fill="none" stroke="#000" stroke-width="3.6"/></g>
<g transform="translate(1717.6,548.3)"><circle r="18.4" fill="#e07f98"/><path d="M-20.6 -15.4H20.6L0 -35.8Z" fill="#5aae3b"/><circle cx="-6" cy="-6.1" r="4" fill="#000"/><circle cx="6" cy="-6.1" r="4" fill="#000"/><path d="M-10.9 3Q0 16.4 10.9 3" fill="none" stroke="#000" stroke-width="3.6"/></g>
<g transform="translate(1650.0,622.6)"><circle r="18.4" fill="#e07f98"/><path d="M-20.6 -15.4H20.6L0 -35.8Z" fill="#5aae3b"/><circle cx="-6" cy="-6.1" r="4" fill="#000"/><circle cx="6" cy="-6.1" r="4" fill="#000"/><path d="M-10.9 3Q0 16.4 10.9 3" fill="none" stroke="#000" stroke-width="3.6"/></g>
<g transform="translate(1667.6,649.6)"><circle r="18.4" fill="#e07f98"/><path d="M-20.6 -15.4H20.6L0 -35.8Z" fill="#5aae3b"/><circle cx="-6" cy="-6.1" r="4" fill="#000"/><circle cx="6" cy="-6.1" r="4" fill="#000"/><path d="M-10.9 3Q0 16.4 10.9 3" fill="none" stroke="#000" stroke-width="3.6"/></g>
<g transform="translate(1545.7,711.8)"><circle r="18.4" fill="#e07f98"/><path d="M-20.6 -15.4H20.6L0 -35.8Z" fill="#5aae3b"/><circle cx="-6" cy="-6.1" r="4" fill="#000"/><circle cx="6" cy="-6.1" r="4" fill="#000"/><path d="M-10.9 3Q0 16.4 10.9 3" fill="none" stroke="#000" stroke-width="3.6"/></g>
<g transform="translate(1417.2,726.9)"><circle r="18.4" fill="#e07f98"/><path d="M-20.6 -15.4H20.6L0 -35.8Z" fill="#5aae3b"/><circle cx="-6" cy="-6.1" r="4" fill="#000"/><circle cx="6" cy="-6.1" r="4" fill="#000"/><path d="M-10.9 3Q0 16.4 10.9 3" fill="none" stroke="#000" stroke-width="3.6"/></g>
<g transform="translate(1579.4,813.3)"><circle r="18.4" fill="#e07f98"/><path d="M-20.6 -15.4H20.6L0 -35.8Z" fill="#5aae3b"/><circle cx="-6" cy="-6.1" r="4" fill="#000"/><circle cx="6" cy="-6.1" r="4" fill="#000"/><path d="M-10.9 3Q0 16.4 10.9 3" fill="none" stroke="#000" stroke-width="3.6"/></g>
<g transform="translate(1578.8,776.2)"><circle r="18.4" fill="#e07f98"/><path d="M-20.6 -15.4H20.6L0 -35.8Z" fill="#5aae3b"/><circle cx="-6" cy="-6.1" r="4" fill="#000"/><circle cx="6" cy="-6.1" r="4" fill="#000"/><path d="M-10.9 3Q0 16.4 10.9 3" fill="none" stroke="#000" stroke-width="3.6"/></g>
<g transform="translate(1478.8,797.2)"><circle r="18.4" fill="#e07f98"/><path d="M-20.6 -15.4H20.6L0 -35.8Z" fill="#5aae3b"/><circle cx="-6" cy="-6.1" r="4" fill="#000"/><circle cx="6" cy="-6.1" r="4" fill="#000"/><path d="M-10.9 3Q0 16.4 10.9 3" fill="none" stroke="#000" stroke-width="3.6"/></g>
<g transform="translate(1523.2,809.3)"><circle r="18.4" fill="#e07f98"/><path d="M-20.6 -15.4H20.6L0 -35.8Z" fill="#5aae3b"/><circle cx="-6" cy="-6.1" r="4" fill="#000"/><circle cx="6" cy="-6.1" r="4" fill="#000"/><path d="M-10.9 3Q0 16.4 10.9 3" fill="none" stroke="#000" stroke-width="3.6"/></g>
<g transform="translate(1429.3,820.3)"><circle r="18.4" fill="#2d8dc3"/><path d="M-20.6 -15.4H20.6L0 -35.8Z" fill="#5aae3b"/><circle cx="-6" cy="-6.1" r="4" fill="#000"/><circle cx="6" cy="-6.1" r="4" fill="#000"/><path d="M-10.9 3Q0 16.4 10.9 3" fill="none" stroke="#000" stroke-width="3.6"/></g>
<g transform="translate(1472.0,855.4)"><circle r="18.4" fill="#e07f98"/><path d="M-20.6 -15.4H20.6L0 -35.8Z" fill="#5aae3b"/><circle cx="-6" cy="-6.1" r="4" fill="#000"/><circle cx="6" cy="-6.1" r="4" fill="#000"/><rect x="-10" y="5.3" width="20" height="5.8" fill="#000"/></g>
<g transform="translate(1609.5,860.4)"><circle r="18.4" fill="#e07f98"/><path d="M-20.6 -15.4H20.6L0 -35.8Z" fill="#5aae3b"/><circle cx="-6" cy="-6.1" r="4" fill="#000"/><circle cx="6" cy="-6.1" r="4" fill="#000"/><path d="M-10.8 11.6Q0 0.2 10.8 11.6" fill="none" stroke="#000" stroke-width="3.6"/></g>
<g transform="translate(1656.0,833.4)"><circle r="18.4" fill="#2d8dc3"/><path d="M-20.6 -15.4H20.6L0 -35.8Z" fill="#5aae3b"/><circle cx="-6" cy="-6.1" r="4" fill="#000"/><circle cx="6" cy="-6.1" r="4" fill="#000"/><path d="M-10.9 3Q0 16.4 10.9 3" fill="none" stroke="#000" stroke-width="3.6"/></g>
<g transform="translate(1483.5,921.6)"><circle r="18.4" fill="#e07f98"/><path d="M-20.6 -15.4H20.6L0 -35.8Z" fill="#5aae3b"/><circle cx="-6" cy="-6.1" r="4" fill="#000"/><circle cx="6" cy="-6.1" r="4" fill="#000"/><path d="M-10.8 11.6Q0 0.2 10.8 11.6" fill="none" stroke="#000" stroke-width="3.6"/></g>
<g transform="translate(1503.0,916.6)"><circle r="18.4" fill="#2d8dc3"/><path d="M-20.6 -15.4H20.6L0 -35.8Z" fill="#5aae3b"/><circle cx="-6" cy="-6.1" r="4" fill="#000"/><circle cx="6" cy="-6.1" r="4" fill="#000"/><path d="M-10.8 11.6Q0 0.2 10.8 11.6" fill="none" stroke="#000" stroke-width="3.6"/></g>
<g transform="translate(1428.9,1050.2)"><circle r="18.4" fill="#2d8dc3"/><path d="M-20.6 -15.4H20.6L0 -35.8Z" fill="#5aae3b"/><circle cx="-6" cy="-6.1" r="4" fill="#000"/><circle cx="6" cy="-6.1" r="4" fill="#000"/><path d="M-10.8 11.6Q0 0.2 10.8 11.6" fill="none" stroke="#000" stroke-width="3.6"/></g>
<g transform="translate(1452.4,1091.4)"><circle r="18.4" fill="#2d8dc3"/><path d="M-20.6 -15.4H20.6L0 -35.8Z" fill="#5aae3b"/><circle cx="-6" cy="-6.1" r="4" fill="#000"/><circle cx="6" cy="-6.1" r="4" fill="#000"/><path d="M-10.8 11.6Q0 0.2 10.8 11.6" fill="none" stroke="#000" stroke-width="3.6"/></g>
<g transform="translate(1600.8,1061.3)"><circle r="18.4" fill="#2d8dc3"/><path d="M-20.6 -15.4H20.6L0 -35.8Z" fill="#5aae3b"/><circle cx="-6" cy="-6.1" r="4" fill="#000"/><circle cx="6" cy="-6.1" r="4" fill="#000"/><path d="M-10.8 11.6Q0 0.2 10.8 11.6" fill="none" stroke="#000" stroke-width="3.6"/></g>
<g transform="translate(1618.9,1116.4)"><circle r="18.4" fill="#2d8dc3"/><path d="M-20.6 -15.4H20.6L0 -35.8Z" fill="#5aae3b"/><circle cx="-6" cy="-6.1" r="4" fill="#000"/><circle cx="6" cy="-6.1" r="4" fill="#000"/><path d="M-10.8 11.6Q0 0.2 10.8 11.6" fill="none" stroke="#000" stroke-width="3.6"/></g>
</svg>
<div class="bev sl" style="position:absolute;left:1948px;top:258px;width:246px;height:66px;"></div>
<div class="ch" style="position:absolute;left:1960px;top:268px;width:17.5px;height:42px;"></div>
<div class="hd" style="position:absolute;left:1956px;top:266.5px;width:25.5px;height:17.5px;box-shadow:inset 2px 2px 0 #fbdcdc,inset -2px -2px 0 #874848,inset 0 5px 0 #ff9c9c;"></div>
<div class="t" style="left:1983.8px;top:268.3px;font-size:21px;line-height:21px;letter-spacing:2.12px;color:#000;font-weight:400;font-family:"DejaVu Sans","Liberation Sans",sans-serif;">On</div>
<div class="t" style="left:1983.8px;top:290.5px;font-size:21px;line-height:21px;letter-spacing:1.58px;color:#000;font-weight:400;font-family:"DejaVu Sans","Liberation Sans",sans-serif;">Off</div>
<div class="t" style="left:2035.9px;top:276.5px;font-size:21px;line-height:21px;letter-spacing:0.71px;color:#000;font-weight:400;font-family:"DejaVu Sans","Liberation Sans",sans-serif;">show-links?</div>
<div class="bev sl" style="position:absolute;left:2200px;top:258px;width:246px;height:66px;"></div>
<div class="ch" style="position:absolute;left:2212px;top:268px;width:17.5px;height:42px;"></div>
<div class="hd" style="position:absolute;left:2208px;top:296.5px;width:25.5px;height:17.5px;box-shadow:inset 2px 2px 0 #fbdcdc,inset -2px -2px 0 #874848,inset 0 5px 0 #ff9c9c;"></div>
<div class="t" style="left:2235.8px;top:268.3px;font-size:21px;line-height:21px;letter-spacing:2.12px;color:#000;font-weight:400;font-family:"DejaVu Sans","Liberation Sans",sans-serif;">On</div>
<div class="t" style="left:2235.8px;top:290.5px;font-size:21px;line-height:21px;letter-spacing:1.58px;color:#000;font-weight:400;font-family:"DejaVu Sans","Liberation Sans",sans-serif;">Off</div>
<div class="t" style="left:2287.8px;top:276.5px;font-size:21px;line-height:21px;letter-spacing:0.59px;color:#000;font-weight:400;font-family:"DejaVu Sans","Liberation Sans",sans-serif;">show-labels?</div>
<div class="t" style="left:2039.2px;top:354.7px;font-size:30px;line-height:30px;letter-spacing:-0.53px;color:#ad251b;font-weight:400;font-family:"DejaVu Sans","Liberation Sans",sans-serif;">GROUP INFORMATION</div>
<div class="bev mo" style="position:absolute;left:1948px;top:388px;width:501px;height:245px;"></div>
<div class="" style="position:absolute;left:1958px;top:398px;width:484px;height:226px;background:#fff;border:2px solid #6a6a6a;border-right:1px solid #9a9a9a;border-bottom:1px solid #9a9a9a;overflow:hidden;"><div class="t" style="left:1.5px;top:1.7px;font-family:'DejaVu Sans Mono','Liberation Mono',monospace;font-size:26.7px;line-height:34.1px;">GROUP 1:25</div><div class="t" style="left:1.5px;top:35.8px;font-family:'DejaVu Sans Mono','Liberation Mono',monospace;font-size:26.7px;line-height:34.1px;">num-agents = 20</div><div class="t" style="left:1.5px;top:69.9px;font-family:'DejaVu Sans Mono','Liberation Mono',monospace;font-size:26.7px;line-height:34.1px;">less-or-more-vocal ≈ 0.5</div><div class="t" style="left:1.5px;top:104.0px;font-family:'DejaVu Sans Mono','Liberation Mono',monospace;font-size:26.7px;line-height:34.1px;">against-or-for-change ≈ 0.5</div><div class="t" style="left:1.5px;top:138.1px;font-family:'DejaVu Sans Mono','Liberation Mono',monospace;font-size:26.7px;line-height:34.1px;">+++++++++++++++++++++++++</div><div class="t" style="left:1.5px;top:172.2px;font-family:'DejaVu Sans Mono','Liberation Mono',monospace;font-size:26.7px;line-height:34.1px;">GROUP 2:25</div><div class="t" style="left:1.5px;top:206.3px;font-family:'DejaVu Sans Mono','Liberation Mono',monospace;font-size:26.7px;line-height:34.1px;">num-agents = 20</div><div style="position:absolute;left:448px;top:0;width:32px;height:230px;background:#fafafa;border-left:1px solid #e6e6e6;"></div><div style="position:absolute;left:456px;top:4px;width:16px;height:138px;background:#c1c1c1;border-radius:8px;"></div></div>
<div class="bev mo" style="position:absolute;left:1946.5px;top:724.5px;width:237.0px;height:88.5px;"></div>
<div class="t" style="left:1954.7px;top:736.9px;font-size:21px;line-height:21px;letter-spacing:-0.42px;color:#000;font-weight:400;font-family:"DejaVu Sans","Liberation Sans",sans-serif;">% OPPONENTS</div>
<div class="" style="position:absolute;left:1956px;top:762px;width:214px;height:40px;background:#fff;"></div>
<div class="t" style="left:1966.1px;top:772.6px;font-size:21px;line-height:21px;letter-spacing:1.87px;color:#000;font-weight:400;font-family:"DejaVu Sans","Liberation Sans",sans-serif;">50</div>
<div class="bev mo" style="position:absolute;left:2206px;top:722.5px;width:239.5px;height:88.5px;"></div>
<div class="t" style="left:2214.4px;top:735.1px;font-size:21px;line-height:21px;letter-spacing:-0.60px;color:#000;font-weight:400;font-family:"DejaVu Sans","Liberation Sans",sans-serif;">% SUPPORTERS</div>
<div class="" style="position:absolute;left:2216px;top:760px;width:216px;height:40px;background:#fff;"></div>
<div class="t" style="left:2225.8px;top:770.8px;font-size:21px;line-height:21px;letter-spacing:1.87px;color:#000;font-weight:400;font-family:"DejaVu Sans","Liberation Sans",sans-serif;">50</div>
<div class="bev mo" style="position:absolute;left:1946.5px;top:826.5px;width:501.0px;height:300.5px;"></div>
<div class="t" style="left:1986.9px;top:837.2px;font-size:20.5px;line-height:20.5px;letter-spacing:0.85px;color:#000;font-weight:700;font-family:"DejaVu Sans","Liberation Sans",sans-serif;-webkit-text-stroke:0;">SHARE-of-ALTERNATIV...</div>
<div class="" style="position:absolute;left:1986px;top:862px;width:298px;height:234px;background:#fff;"></div>
<div class="t" style="left:1953.9px;top:872.8px;font-size:21px;line-height:21px;letter-spacing:1.40px;color:#000;font-weight:400;font-family:"DejaVu Sans","Liberation Sans",sans-serif;">10</div>
<div class="t" style="left:1968.6px;top:1073.0px;font-size:21px;line-height:21px;letter-spacing:0.00px;color:#000;font-weight:400;font-family:"DejaVu Sans","Liberation Sans",sans-serif;">0</div>
<div class="t" style="left:1983.4px;top:1100.9px;font-size:21px;line-height:21px;letter-spacing:0.00px;color:#000;font-weight:400;font-family:"DejaVu Sans","Liberation Sans",sans-serif;">0</div>
<div class="t" style="left:2252.2px;top:1100.9px;font-size:21px;line-height:21px;letter-spacing:1.40px;color:#000;font-weight:400;font-family:"DejaVu Sans","Liberation Sans",sans-serif;">10</div>
<div class="" style="position:absolute;left:2292.5px;top:862.5px;width:22.5px;height:22.5px;background:#a61b6e;border:2px solid #1a1a1a;"></div>
<div class="t" style="left:2321.2px;top:866.1px;font-size:21px;line-height:21px;letter-spacing:0.64px;color:#000;font-weight:400;font-family:"DejaVu Sans","Liberation Sans",sans-serif;">Opponents</div>
<div class="" style="position:absolute;left:2292.5px;top:894.5px;width:22.5px;height:22.5px;background:#5aae3b;border:2px solid #1a1a1a;"></div>
<div class="t" style="left:2321.0px;top:898.4px;font-size:21px;line-height:21px;letter-spacing:0.51px;color:#000;font-weight:400;font-family:"DejaVu Sans","Liberation Sans",sans-serif;">Supporters</div>
<div class="bev mo" style="position:absolute;left:1948px;top:1146px;width:499.5px;height:301.5px;"></div>
<div class="t" style="left:2006.7px;top:1157.0px;font-size:20.5px;line-height:20.5px;letter-spacing:0.07px;color:#000;font-weight:700;font-family:"DejaVu Sans","Liberation Sans",sans-serif;-webkit-text-stroke:0;">HAPPY or UNHAPPY?</div>
<div class="" style="position:absolute;left:1988.5px;top:1182px;width:277.5px;height:233.5px;background:#fff;"></div>
<div class="t" style="left:1955.8px;top:1192.4px;font-size:21px;line-height:21px;letter-spacing:1.40px;color:#000;font-weight:400;font-family:"DejaVu Sans","Liberation Sans",sans-serif;">10</div>
<div class="t" style="left:1970.5px;top:1391.5px;font-size:21px;line-height:21px;letter-spacing:0.00px;color:#000;font-weight:400;font-family:"DejaVu Sans","Liberation Sans",sans-serif;">0</div>
<div class="t" style="left:1985.5px;top:1420.7px;font-size:21px;line-height:21px;letter-spacing:0.00px;color:#000;font-weight:400;font-family:"DejaVu Sans","Liberation Sans",sans-serif;">0</div>
<div class="t" style="left:2234.1px;top:1420.7px;font-size:21px;line-height:21px;letter-spacing:1.40px;color:#000;font-weight:400;font-family:"DejaVu Sans","Liberation Sans",sans-serif;">10</div>
<div class="" style="position:absolute;left:2274px;top:1182.5px;width:23px;height:22.5px;background:#a61b6e;border:2px solid #1a1a1a;"></div>
<div class="t" style="left:2303.3px;top:1186.5px;font-size:21px;line-height:21px;letter-spacing:0.66px;color:#000;font-weight:400;font-family:"DejaVu Sans","Liberation Sans",sans-serif;">Opponents+</div>
<div class="" style="position:absolute;left:2274px;top:1214.52px;width:23px;height:22.5px;background:#e07f98;border:2px solid #1a1a1a;"></div>
<div class="t" style="left:2303.3px;top:1218.6px;font-size:21px;line-height:21px;letter-spacing:1.20px;color:#000;font-weight:400;font-family:"DejaVu Sans","Liberation Sans",sans-serif;">Opponents-</div>
<div class="" style="position:absolute;left:2274px;top:1246.54px;width:23px;height:22.5px;background:#f8d6da;border:2px solid #1a1a1a;"></div>
<div class="t" style="left:2303.3px;top:1250.7px;font-size:21px;line-height:21px;letter-spacing:0.64px;color:#000;font-weight:400;font-family:"DejaVu Sans","Liberation Sans",sans-serif;">Opponents</div>
<div class="" style="position:absolute;left:2274px;top:1278.56px;width:23px;height:22.5px;background:#5aae3b;border:2px solid #1a1a1a;"></div>
<div class="t" style="left:2303.1px;top:1282.8px;font-size:21px;line-height:21px;letter-spacing:0.54px;color:#000;font-weight:400;font-family:"DejaVu Sans","Liberation Sans",sans-serif;">Supporters+</div>
<div class="" style="position:absolute;left:2274px;top:1310.58px;width:23px;height:22.5px;background:#2ecc40;border:2px solid #1a1a1a;"></div>
<div class="t" style="left:2303.1px;top:1314.9px;font-size:21px;line-height:21px;letter-spacing:1.02px;color:#000;font-weight:400;font-family:"DejaVu Sans","Liberation Sans",sans-serif;">Supporters-</div>
<div class="" style="position:absolute;left:2274px;top:1342.6px;width:23px;height:22.5px;background:#d3f5dc;border:2px solid #1a1a1a;"></div>
<div class="t" style="left:2303.1px;top:1346.9px;font-size:21px;line-height:21px;letter-spacing:0.51px;color:#000;font-weight:400;font-family:"DejaVu Sans","Liberation Sans",sans-serif;">Supporters</div>
<div class="" style="position:absolute;left:0px;top:1466px;width:2532px;height:2px;background:#b2b2b2;"></div>
<div class="" style="position:absolute;left:0px;top:1468px;width:2532px;height:18px;background:linear-gradient(#fff,#f6f6f6);"></div>
<div class="" style="position:absolute;left:0px;top:1486px;width:2532px;height:2px;background:#b2b2b2;"></div>
<div class="" style="position:absolute;left:0px;top:1488px;width:2532px;height:46px;background:#bcbce6;"></div>
<div class="" style="position:absolute;left:0px;top:1534px;width:2532px;height:2px;background:#666;"></div>
<svg style="position:absolute;left:3px;top:1472px" width="40" height="11"><path d="M1 10L7.5 1L14 10Z" fill="#8e8e8e"/><path d="M23 1H37L30 10Z" fill="#8e8e8e"/></svg>
<div class="" style="position:absolute;left:1265px;top:1471px;width:12px;height:12px;background:#e6e6e6;border-radius:6px;"></div>
<div class="t" style="left:1.7px;top:1499.5px;font-size:22px;line-height:22px;letter-spacing:-1.57px;color:#000;font-weight:700;font-family:"DejaVu Sans","Liberation Sans",sans-serif;-webkit-text-stroke:0;">Command Center</div>
<div class="" style="position:absolute;left:2356px;top:1496px;width:34px;height:28px;background:linear-gradient(#e4e4e4,#fbfbfb);border:2px solid #ababab;"></div>
<svg style="position:absolute;left:2363px;top:1499px" width="20" height="20" viewBox="0 0 20 20"><path d="M8 1H19V12L15.3 8.3L11.5 12L8 8.5L11.7 4.7Z M1 8L4.7 11.7L8.5 8L12 11.5L8.3 15.3L12 19H1Z" fill="#000"/></svg>
<div class="" style="position:absolute;left:2396px;top:1494px;width:140px;height:32px;background:#fff;border-radius:9px;box-shadow:0 1px 1px rgba(0,0,0,.2);"></div>
<div class="t" style="left:2441.7px;top:1500.9px;font-size:18.5px;line-height:18.5px;letter-spacing:-0.81px;color:#000;font-weight:400;font-family:"DejaVu Sans","Liberation Sans",sans-serif;">Clear</div>
<div class="" style="position:absolute;left:2510px;top:189px;width:22px;height:1277px;background:#fafafa;border-left:2px solid #e8e8e8;"></div>
<div class="" style="position:absolute;left:2518px;top:193px;width:22px;height:1202px;background:#c1c1c1;border-radius:8px;"></div>
</body></html>
